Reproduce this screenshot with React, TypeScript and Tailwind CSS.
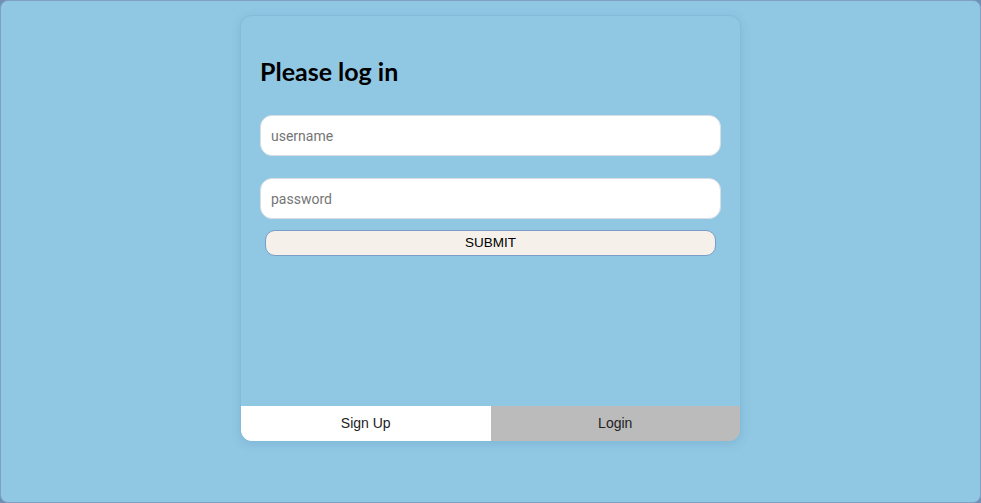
export default function App() {
  return (
    <div className="h-[503px] w-full bg-[#6f8fb5]">
      <div className="flex h-full flex-col rounded-[8px] border border-[#7f9fc3] bg-[#90c7e3] pt-[14px]">
        <div className="ml-[239px] flex h-[427px] w-[501px] flex-col overflow-hidden rounded-[12px] border border-[#84bbd8] bg-[#90c7e3] shadow-[0_2px_10px_rgba(60,110,150,0.18)]">
          <div className="flex flex-col px-[19px] pt-[41px]">
            <h1 className="font-['Lato','DejaVu_Sans',sans-serif] text-[25px] font-bold leading-[29px] text-black">
              Please log in
            </h1>
            <input
              placeholder="username"
              className="mt-[29px] h-[41px] w-full rounded-[12px] border border-[#d8dde3] bg-white px-[10px] font-['Roboto',sans-serif] text-[14px] text-[#333] outline-none placeholder:text-[#757575]"
            />
            <input
              type="password"
              placeholder="password"
              className="mt-[22px] h-[41px] w-full rounded-[12px] border border-[#d8dde3] bg-white px-[10px] font-['Roboto',sans-serif] text-[14px] text-[#333] outline-none placeholder:text-[#757575]"
            />
            <button className="mx-[5px] mt-[11px] h-[26px] rounded-[10px] border border-[#7a9cc6] bg-[#f5f1ea] font-['Liberation_Sans',Arial,sans-serif] text-[13.5px] text-black">
              SUBMIT
            </button>
          </div>
          <div className="mt-auto flex h-[35px] font-['Liberation_Sans',Arial,sans-serif] text-[14px] text-[#222]">
            <button className="flex-1 bg-white">Sign Up</button>
            <button className="flex-1 bg-[#bbbbbb]">Login</button>
          </div>
        </div>
      </div>
    </div>
  );
}
